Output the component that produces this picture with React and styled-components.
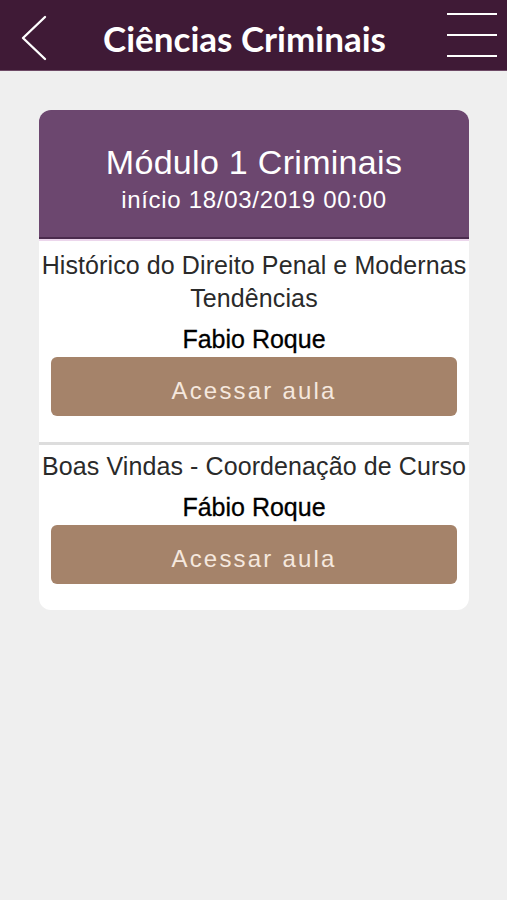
import React from "react"
import styled, { createGlobalStyle } from "styled-components"

const GlobalStyle = createGlobalStyle`
  html, body {
    margin: 0;
    padding: 0;
    background: #efefef;
  }
  body {
    font-family: "Liberation Sans", Arial, sans-serif;
  }
`

const lessons = [
  { title: "Histórico do Direito Penal e Modernas Tendências", teacher: "Fabio Roque" },
  { title: "Boas Vindas - Coordenação de Curso", teacher: "Fábio Roque" },
]

const App = () => (
  <>
    <GlobalStyle />
    <Page>
      <TopBar>
        <IconButton aria-label="voltar">
          <svg width="28" height="46" viewBox="0 0 28 46">
            <polyline points="25,2 3,23 25,44" fill="none" stroke="#fff" strokeWidth="2.4" strokeLinecap="round" strokeLinejoin="round" />
          </svg>
        </IconButton>
        <BarTitle>Ciências Criminais</BarTitle>
        <Burger aria-label="menu">
          <span />
          <span />
          <span />
        </Burger>
      </TopBar>

      <Content>
        <Card>
          <CardHeader>
            <ModuleTitle>Módulo 1 Criminais</ModuleTitle>
            <ModuleDate>início 18/03/2019 00:00</ModuleDate>
          </CardHeader>
          {lessons.map((lesson, i) => (
            <Lesson key={i} first={i === 0} last={i === lessons.length - 1}>
              <LessonTitle>{lesson.title}</LessonTitle>
              <Teacher>{lesson.teacher}</Teacher>
              <AccessButton>Acessar aula</AccessButton>
            </Lesson>
          ))}
        </Card>
      </Content>
    </Page>
  </>
)

export default App

const Page = styled.div`
  min-height: 900px;
  background: #efefef;
`

const TopBar = styled.header`
  height: 71px;
  background: #3f1a36;
  border-bottom: 1px solid #6e4a66;
  display: flex;
  align-items: center;
  justify-content: space-between;
  padding: 0 10px 0 20px;
  box-sizing: border-box;
`

const IconButton = styled.div`
  display: flex;
  align-items: center;
  width: 40px;
  margin-top: 6px;
`

const BarTitle = styled.h1`
  margin: 0;
  flex: 1;
  text-align: center;
  font-family: Lato, "Liberation Sans", sans-serif;
  font-weight: 700;
  font-size: 35px;
  line-height: 40px;
  margin-top: 6px;
  color: #fff;
  padding-right: 18px;
  white-space: nowrap;
`

const Burger = styled.div`
  width: 50px;
  height: 44px;
  display: flex;
  flex-direction: column;
  justify-content: space-between;
  margin-top: -1px;

  span {
    display: block;
    height: 2px;
    background: #fff;
  }
`

const Content = styled.main`
  padding: 39px 38px 0 39px;
`

const Card = styled.section`
  background: #fff;
  border-radius: 12px;
  overflow: hidden;
`

const CardHeader = styled.div`
  background: #6c476f;
  height: 129px;
  border-bottom: 2px solid #4a2b4d;
  box-shadow: 0 2px 0 #ecd6ec;
  display: flex;
  flex-direction: column;
  align-items: center;
  justify-content: center;
  padding-top: 10px;
  box-sizing: border-box;
  color: #fff;
`

const ModuleTitle = styled.div`
  font-size: 34px;
  line-height: 38px;
  letter-spacing: 0.3px;
`

const ModuleDate = styled.div`
  font-size: 24px;
  line-height: 30px;
  letter-spacing: 0.7px;
  margin-top: 4px;
`

const Lesson = styled.div`
  display: flex;
  flex-direction: column;
  align-items: center;
  padding: ${props => (props.first ? "10px" : "5px")} 12px 26px;
  border-bottom: ${props => (props.last ? "none" : "3px solid #dddddd")};
`

const LessonTitle = styled.div`
  font-size: 25px;
  line-height: 33px;
  letter-spacing: 0.1px;
  color: #2a2a2a;
  text-align: center;
  margin: 0 -12px;
`

const Teacher = styled.div`
  font-size: 25px;
  line-height: 34px;
  color: #000;
  margin-top: 7px;
  -webkit-text-stroke: 0.3px #000;
`

const AccessButton = styled.button`
  width: 100%;
  height: 59px;
  margin-top: 1px;
  padding: 8px 0 0;
  border: none;
  border-radius: 6px;
  background: #a5836a;
  color: #f5e8de;
  font-family: "Liberation Sans", Arial, sans-serif;
  font-size: 24px;
  letter-spacing: 2.2px;
  cursor: pointer;
`
